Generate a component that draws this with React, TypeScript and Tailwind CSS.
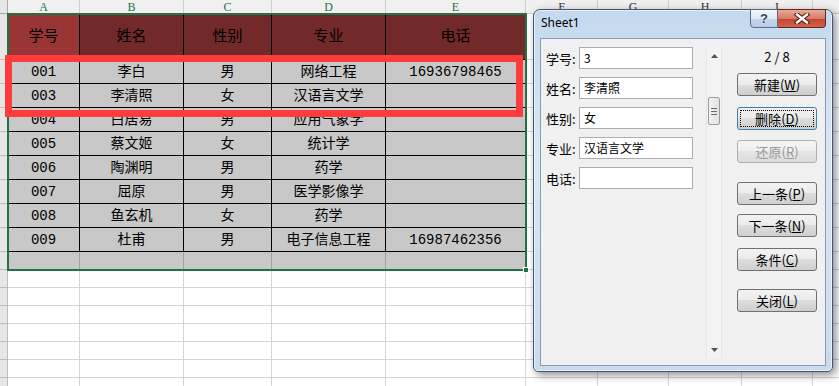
import React from 'react';

const cols = [
  { w: 'w-[72px]', l: 'A', sel: true },
  { w: 'w-[104px]', l: 'B', sel: true },
  { w: 'w-[88px]', l: 'C', sel: true },
  { w: 'w-[114px]', l: 'D', sel: true },
  { w: 'w-[140px]', l: 'E', sel: true },
  { w: 'w-[72px]', l: 'F', sel: false },
  { w: 'w-[71px]', l: 'G', sel: false },
  { w: 'w-[73px]', l: 'H', sel: false },
  { w: 'w-[71px]', l: 'I', sel: false },
  { w: 'w-[60px]', l: '', sel: false },
];

const heads = ['学号', '姓名', '性别', '专业', '电话'];

const rows = [
  ['001', '李白', '男', '网络工程', '16936798465'],
  ['003', '李清照', '女', '汉语言文学', ''],
  ['004', '白居易', '男', '应用气象学', ''],
  ['005', '蔡文姬', '女', '统计学', ''],
  ['006', '陶渊明', '男', '药学', ''],
  ['007', '屈原', '男', '医学影像学', ''],
  ['008', '鱼玄机', '女', '药学', ''],
  ['009', '杜甫', '男', '电子信息工程', '16987462356'],
];

const fields = [
  { label: '学号:', value: '3' },
  { label: '姓名:', value: '李清照' },
  { label: '性别:', value: '女' },
  { label: '专业:', value: '汉语言文学' },
  { label: '电话:', value: '' },
];

const RowHead = () => (
  <div className="w-[8px] shrink-0 h-full bg-[#e6e6e6] border-r border-b border-[#bdbdbd]" />
);

const Sheet = () => {
  return (
    <div className="flex flex-col">
      {/* column letters */}
      <div className="flex h-[14px]">
        <div className="w-[8px] shrink-0 h-full bg-[#e6e6e6] border-r border-b border-[#ababab]" />
        {cols.map((c, i) => (
          <div
            key={i}
            className={`${c.w} shrink-0 h-full flex items-center justify-center border-r border-b border-[#cfcfcf] bg-[#f0f0f0] font-['Liberation_Serif',serif] text-[12px] leading-none ${c.sel ? 'text-[#217346]' : 'text-[#333]'}`}
          >
            {c.l}
          </div>
        ))}
      </div>

      {/* table header */}
      <div className="flex h-[46px]">
        <RowHead />
        {cols.map((c, i) =>
          i < 5 ? (
            <div
              key={i}
              className={`${c.w} shrink-0 h-full flex items-center justify-center pt-[4px] border-r border-b border-black text-[15px] text-black ${i === 0 ? 'bg-[#9a3535]' : 'bg-[#722929]'}`}
            >
              {heads[i]}
            </div>
          ) : (
            <div key={i} className={`${c.w} shrink-0 h-full border-r border-b border-[#d4d4d4]`} />
          )
        )}
      </div>

      {/* data rows */}
      {rows.map((r) => (
        <div key={r[0]} className="flex h-[24px]">
          <RowHead />
          {cols.map((c, i) =>
            i < 5 ? (
              <div
                key={i}
                className={`${c.w} shrink-0 h-full flex items-center justify-center pt-[2px] border-r border-b border-black bg-[#c8c8c8] text-[14px] text-black`}
              >
                {r[i]}
              </div>
            ) : (
              <div key={i} className={`${c.w} shrink-0 h-full border-r border-b border-[#d4d4d4]`} />
            )
          )}
        </div>
      ))}

      {/* empty row inside selection */}
      <div className="flex h-[18px]">
        <RowHead />
        {cols.map((c, i) =>
          i < 5 ? (
            <div key={i} className={`${c.w} shrink-0 h-full border-r border-b border-[#a0a0a0] bg-[#c8c8c8]`} />
          ) : (
            <div key={i} className={`${c.w} shrink-0 h-full border-r border-b border-[#d4d4d4]`} />
          )
        )}
      </div>

      {/* blank rows */}
      {[0, 1, 2, 3, 4, 5, 6].map((n) => (
        <div key={n} className="flex h-[18px]">
          <RowHead />
          {cols.map((c, i) => (
            <div key={i} className={`${c.w} shrink-0 h-full border-r border-b border-[#d4d4d4]`} />
          ))}
        </div>
      ))}
    </div>
  );
};

const Btn = ({ text, k, mt, focus, disabled }: { text: string; k: string; mt: string; focus?: boolean; disabled?: boolean }) => (
  <div
    className={`relative ${mt} w-[80px] h-[23px] shrink-0 rounded-[3px] border flex items-center justify-center text-[13px] leading-none ${
      disabled
        ? 'border-[#adb2b5] text-[#9a9a9a] bg-[linear-gradient(#f4f4f4,#efefef_50%,#e5e5e5_50%,#dcdcdc)]'
        : focus
        ? 'border-[#3c7fb1] text-black bg-[linear-gradient(#f2f2f2,#ebebeb_50%,#dddddd_50%,#cfcfcf)]'
        : 'border-[#707070] text-black bg-[linear-gradient(#f2f2f2,#ebebeb_50%,#dddddd_50%,#cfcfcf)]'
    }`}
  >
    {focus && <div className="absolute inset-[2px] border border-dotted border-black" />}
    <span>
      {text}(<span className="underline">{k}</span>)
    </span>
  </div>
);

const FormDialog = () => {
  return (
    <div className="absolute left-[533px] top-[9px] w-[300px] h-[363px] rounded-t-[7px] rounded-b-[5px] border border-[#44546a] bg-[linear-gradient(#c4d9ee,#d8e7f6_40%,#c8dbef)] shadow-[3px_3px_8px_rgba(0,0,0,0.45),inset_0_0_0_1px_rgba(255,255,255,0.6)] flex flex-col font-['Noto_Sans_CJK_SC',sans-serif]">
      <div className="h-[28px] shrink-0 pl-[7px] pt-[4px] text-[12px] leading-[18px] text-black font-['Noto_Sans','Noto_Sans_CJK_SC',sans-serif]">
        Sheet1
      </div>

      {/* caption buttons */}
      <div className="absolute right-[6px] top-[-1px] flex">
        <div className="w-[28px] h-[19px] rounded-bl-[4px] border border-[#5a6a80] bg-[linear-gradient(#f4f8fc,#dfe9f4_50%,#c2d4e8_50%,#b8cde4)] flex items-center justify-center text-[13px] font-bold leading-none text-[#34404e] font-['Liberation_Sans',sans-serif] [text-shadow:0_0_2px_white]">
          ?
        </div>
        <div className="w-[48px] h-[19px] rounded-br-[4px] border border-l-0 border-[#5e2a20] bg-[linear-gradient(#e9a899,#d77a68_50%,#c7442e_50%,#d0604a)] flex items-center justify-center">
          <svg width="16" height="11" viewBox="0 0 16 11">
            <path d="M3 1.5 L13 9.5 M13 1.5 L3 9.5" stroke="#4a1a10" strokeWidth="4.5" strokeLinecap="square" />
            <path d="M3 1.5 L13 9.5 M13 1.5 L3 9.5" stroke="#ffffff" strokeWidth="2.4" strokeLinecap="square" />
          </svg>
        </div>
      </div>

      {/* client area */}
      <div className="flex-1 mx-[6px] mb-[5px] border border-[#8a9bb0] bg-[#f0f0f0] flex pl-[5px] pt-[8px]">
        <div className="flex flex-col gap-[8px]">
          {fields.map((f) => (
            <div key={f.label} className="flex items-center h-[22px]">
              <div className="w-[33px] text-[13px] text-black leading-none">{f.label}</div>
              <div className="w-[114px] h-[22px] border border-[#abadb3] bg-white flex items-center px-[4px] text-[12px] text-black leading-none">
                {f.value}
              </div>
            </div>
          ))}
        </div>

        {/* scrollbar */}
        <div className="ml-[13px] w-[16px] h-[311px] flex flex-col border-x border-[#e6e6e6] bg-[#f3f3f3]">
          <div className="h-[17px] flex items-center justify-center">
            <svg width="7" height="4" viewBox="0 0 7 4">
              <path d="M0 4 L3.5 0 L7 4 Z" fill="#555" />
            </svg>
          </div>
          <div className="mt-[33px] mx-[1px] h-[28px] rounded-[2px] border border-[#9a9a9a] bg-[linear-gradient(90deg,#f3f3f3,#e2e2e2)] flex flex-col items-center justify-center gap-[2px]">
            <div className="w-[6px] h-px bg-[#6a6a6a]" />
            <div className="w-[6px] h-px bg-[#6a6a6a]" />
            <div className="w-[6px] h-px bg-[#6a6a6a]" />
          </div>
          <div className="flex-1" />
          <div className="h-[17px] flex items-center justify-center">
            <svg width="7" height="4" viewBox="0 0 7 4">
              <path d="M0 0 L7 0 L3.5 4 Z" fill="#555" />
            </svg>
          </div>
        </div>

        {/* buttons */}
        <div className="ml-[15px] w-[80px] flex flex-col">
          <div className="h-[18px] flex items-center justify-center text-[13px] text-black leading-none">2 / 8</div>
          <Btn text="新建" k="W" mt="mt-[8px]" />
          <Btn text="删除" k="D" mt="mt-[11px]" focus />
          <Btn text="还原" k="R" mt="mt-[10px]" disabled />
          <Btn text="上一条" k="P" mt="mt-[19px]" />
          <Btn text="下一条" k="N" mt="mt-[9px]" />
          <Btn text="条件" k="C" mt="mt-[11px]" />
          <Btn text="关闭" k="L" mt="mt-[18px]" />
        </div>
      </div>
    </div>
  );
};

export default function App() {
  return (
    <div className="relative w-[839px] h-[386px] overflow-hidden bg-white font-['Liberation_Mono','Noto_Sans_CJK_SC',monospace]">
      <Sheet />

      {/* selection outline */}
      <div className="absolute left-[7px] top-[13px] w-[520px] h-[258px] border-2 border-[#217346]" />
      <div className="absolute left-[523px] top-[267px] w-[6px] h-[6px] bg-[#217346] border border-white" />

      {/* red annotation box */}
      <div className="absolute left-[5px] top-[55px] w-[518px] h-[62px] border-[7px] border-[#ff3b3b]" />

      <FormDialog />
    </div>
  );
}
